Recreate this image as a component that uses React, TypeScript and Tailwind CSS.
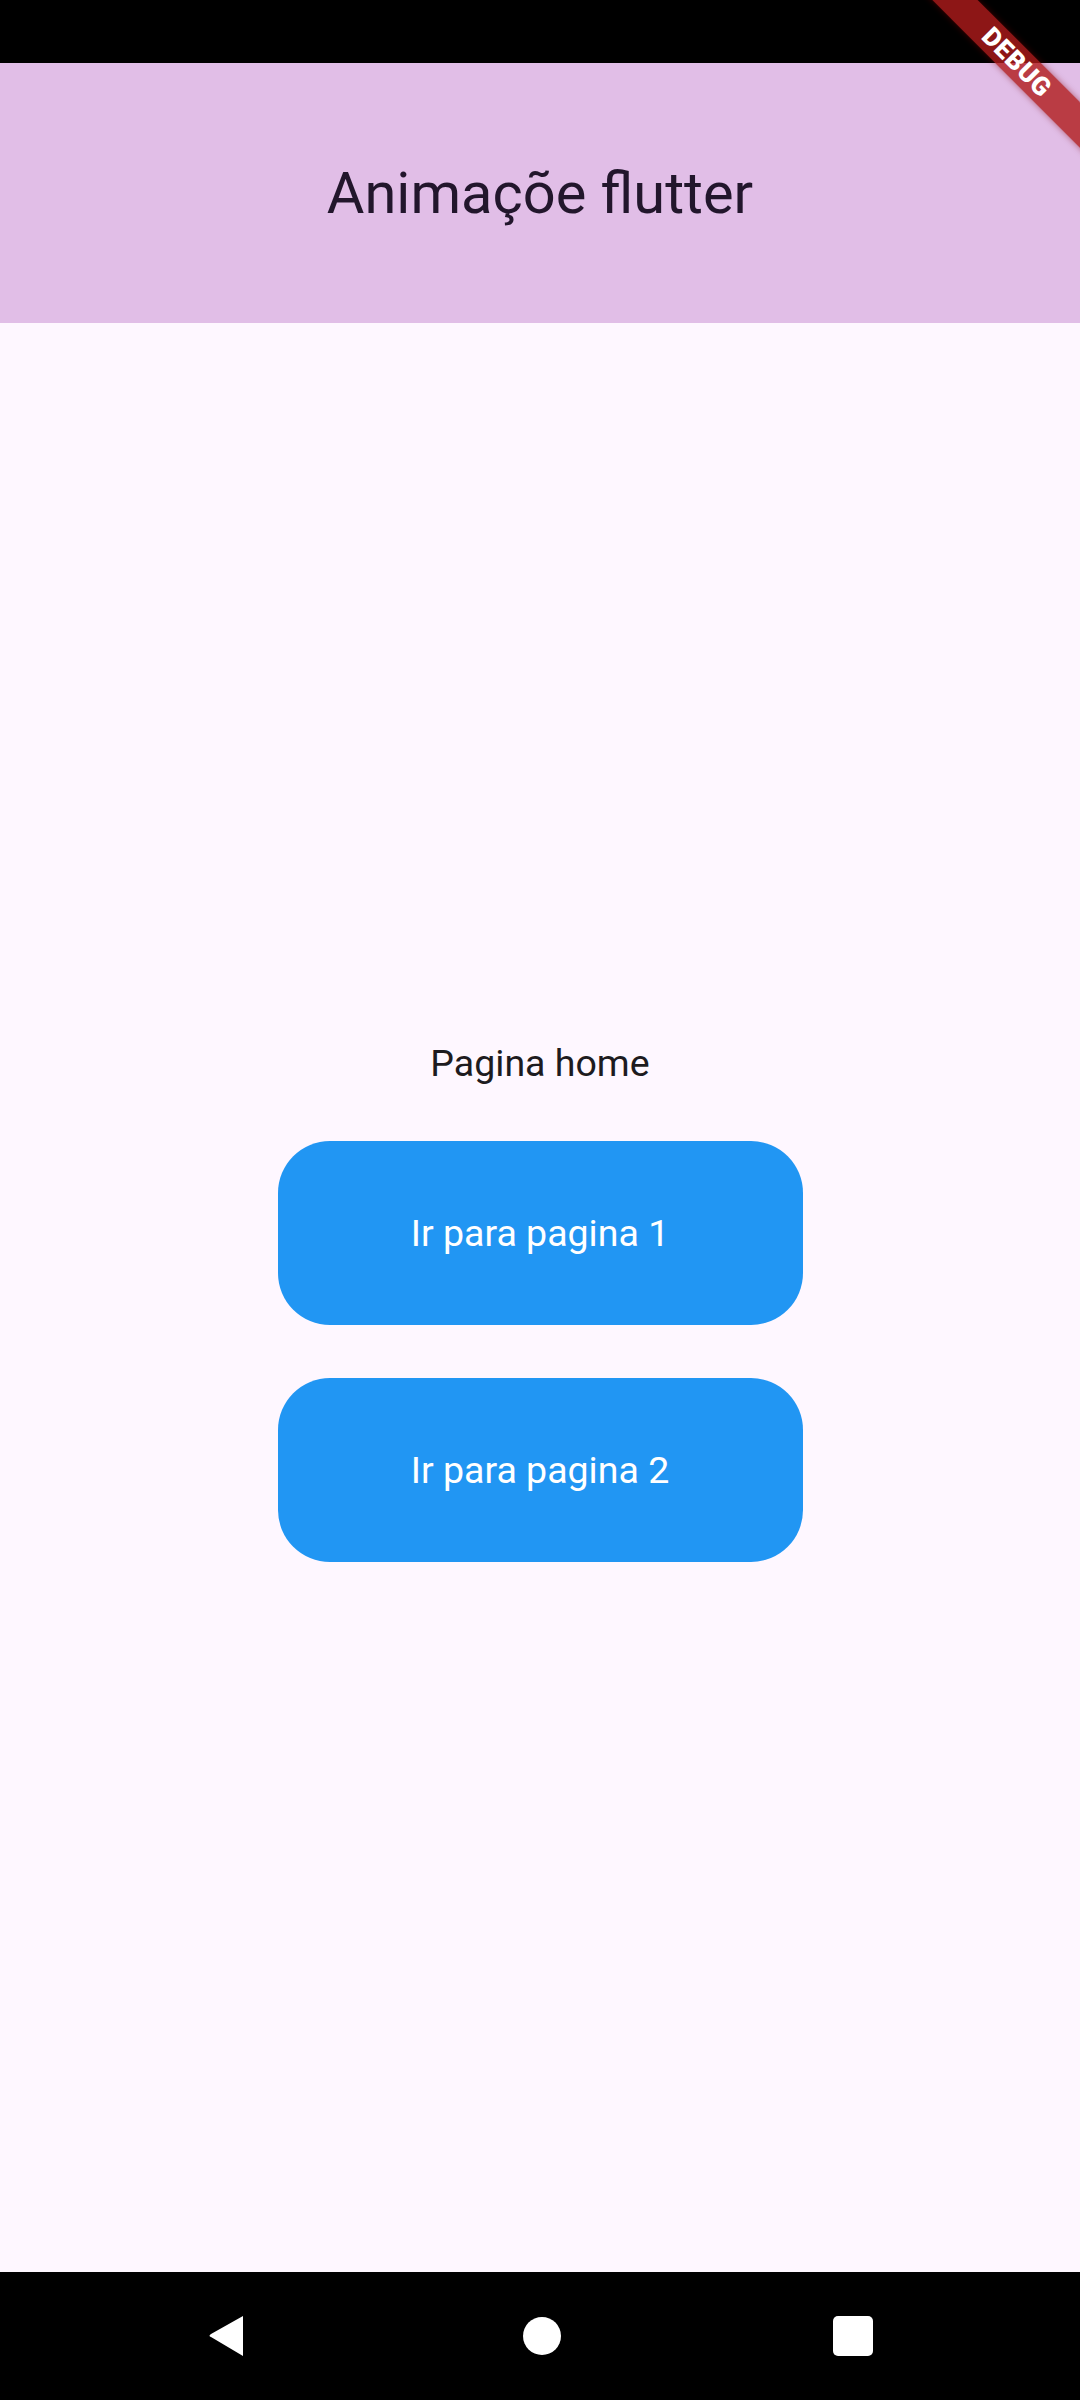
import React from 'react';

function NavBar() {
    return (
        <div className="h-[128px] bg-black flex items-center justify-center">
            {/* Back */}
            <svg width="38" height="44" viewBox="0 0 38 44">
                <path d="M36 2 L36 42 L4 23 Q1 22 4 20 Z" fill="#ffffff" strokeLinejoin="round" />
            </svg>
            {/* Home */}
            <div className="ml-[278px] w-[38px] h-[38px] rounded-full bg-white" />
            {/* Recents */}
            <div className="ml-[272px] w-[40px] h-[40px] rounded-[5px] bg-white" />
        </div>
    );
}

export default function App() {
    return (
        <div
            className="relative w-[1080px] h-[2400px] overflow-hidden flex flex-col bg-[#fef7ff]"
            style={{ fontFamily: 'Roboto, "Noto Sans", sans-serif' }}
        >
            {/* Status bar */}
            <div className="h-[63px] bg-black shrink-0" />

            {/* App bar */}
            <div className="h-[260px] shrink-0 bg-[#e1bee7] flex items-center justify-center">
                <h1 className="text-[57.75px] leading-[68px] font-normal text-[#22162c]">Animaçõe flutter</h1>
            </div>

            {/* Body */}
            <div className="flex-1 flex flex-col items-center justify-center pt-[8px]">
                <p className="text-[37.5px] leading-[44px] text-[#1d1b20]">Pagina home</p>
                <button className="mt-[56px] w-[525px] h-[184px] rounded-[52px] bg-[#2196f3] text-white text-[37.5px] leading-[44px]">
                    Ir para pagina 1
                </button>
                <button className="mt-[53px] w-[525px] h-[184px] rounded-[52px] bg-[#2196f3] text-white text-[37.5px] leading-[44px]">
                    Ir para pagina 2
                </button>
            </div>

            <NavBar />

            {/* Debug banner */}
            <div className="absolute left-[867px] top-[46px] w-[300px] h-[32px] rotate-45 bg-[rgba(176,28,28,0.8)] shadow-[0_0_6px_rgba(127,0,0,0.5)] flex items-center justify-center">
                <span className="text-white text-[26px] leading-none font-black tracking-[0.5px]">DEBUG</span>
            </div>
        </div>
    );
}
